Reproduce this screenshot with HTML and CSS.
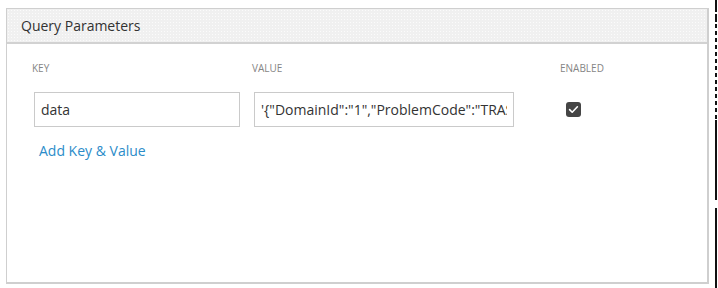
FILE: index.html
```html
<!DOCTYPE html>
<html>
<head>
<meta charset="utf-8">
<link rel="stylesheet" href="styles.css">
</head>
<body>
<div class="panel">
  <div class="panel-header">Query Parameters</div>
  <div class="panel-body">
    <div class="params">
      <div class="col-label">KEY</div>
      <div class="col-label">VALUE</div>
      <div class="col-label">ENABLED</div>
      <div class="cell"><input class="field field-key" type="text" value="data"></div>
      <div class="cell"><input class="field field-value" type="text" value="'{&quot;DomainId&quot;:&quot;1&quot;,&quot;ProblemCode&quot;:&quot;TRASH&quot;,&quot;Details&quot;:&quot;x&quot;}'"></div>
      <div class="cell cell-check">
        <span class="checkbox">
          <svg width="15" height="15" viewBox="0 0 15 15"><rect x="0" y="0" width="15" height="15" rx="3" fill="#454545"/><path d="M3.6 7.6 L6.2 10.2 L11.4 4.8" fill="none" stroke="#fff" stroke-width="1.6" stroke-linecap="round" stroke-linejoin="round"/></svg>
        </span>
      </div>
    </div>
    <a class="add-link" href="#">Add Key &amp; Value</a>
  </div>
</div>
<div class="edge-mark"></div>
</body>
</html>
```
FILE: styles.css
```css
html, body {
  margin: 0;
  padding: 0;
  background: #fff;
}
body {
  font-family: "Open Sans", Lato, sans-serif;
  color: #333;
  width: 718px;
  height: 288px;
  position: relative;
  overflow: hidden;
}
.panel {
  margin: 8px 0 0 6px;
  width: 700px;
  height: 273px;
  border: 1px solid #cfcfcf;
  border-bottom-width: 2px;
  border-right-width: 2px;
  display: flex;
  flex-direction: column;
}
.panel-header {
  height: 33px;
  border-bottom: 2px solid #d2d2d2;
  background-color: #f0f0f0;
  background-image: radial-gradient(#fbfbfb 0.6px, transparent 0.8px);
  background-size: 3px 3px;
  font-size: 14px;
  color: #323232;
  padding-left: 14px;
  line-height: 33px;
  box-sizing: content-box;
}
.panel-body {
  padding: 18px 0 0 25px;
  flex: 1;
}
.params {
  display: grid;
  grid-template-columns: 220px 308px 1fr;
  row-gap: 18px;
}
.col-label {
  font-family: "Open Sans", sans-serif;
  font-size: 10px;
  color: #858585;
  line-height: 12px;
}
.cell {
  padding-left: 2px;
}
.field {
  box-sizing: border-box;
  height: 35px;
  border: 1px solid #cacaca;
  border-radius: 0;
  padding: 0 6px;
  font-family: "Open Sans", Lato, sans-serif;
  font-size: 14px;
  color: #333;
  background: #fff;
  outline: none;
  margin: 0;
  display: block;
}
.field-key { width: 206px; }
.field-value { width: 260px; }
.cell-check {
  padding-left: 6px;
  display: flex;
  align-items: center;
}
.checkbox {
  display: block;
  width: 15px;
  height: 15px;
  line-height: 0;
}
.add-link {
  display: inline-block;
  margin: 14px 0 0 7px;
  font-size: 14px;
  color: #2b8cc9;
  text-decoration: none;
}
.edge-mark {
  position: absolute;
  right: 1px;
  top: 0;
  width: 2px;
  height: 288px;
  background:
    linear-gradient(#111, #111) 0 0 / 2px 12px no-repeat,
    linear-gradient(#111, #111) 0 14px / 2px 8px no-repeat,
    repeating-linear-gradient(#111 0 4px, transparent 4px 7px) 0 24px / 2px 96px no-repeat,
    linear-gradient(#111, #111) 0 120px / 2px 80px no-repeat,
    linear-gradient(#111, #111) 0 208px / 2px 80px no-repeat;
}
```
